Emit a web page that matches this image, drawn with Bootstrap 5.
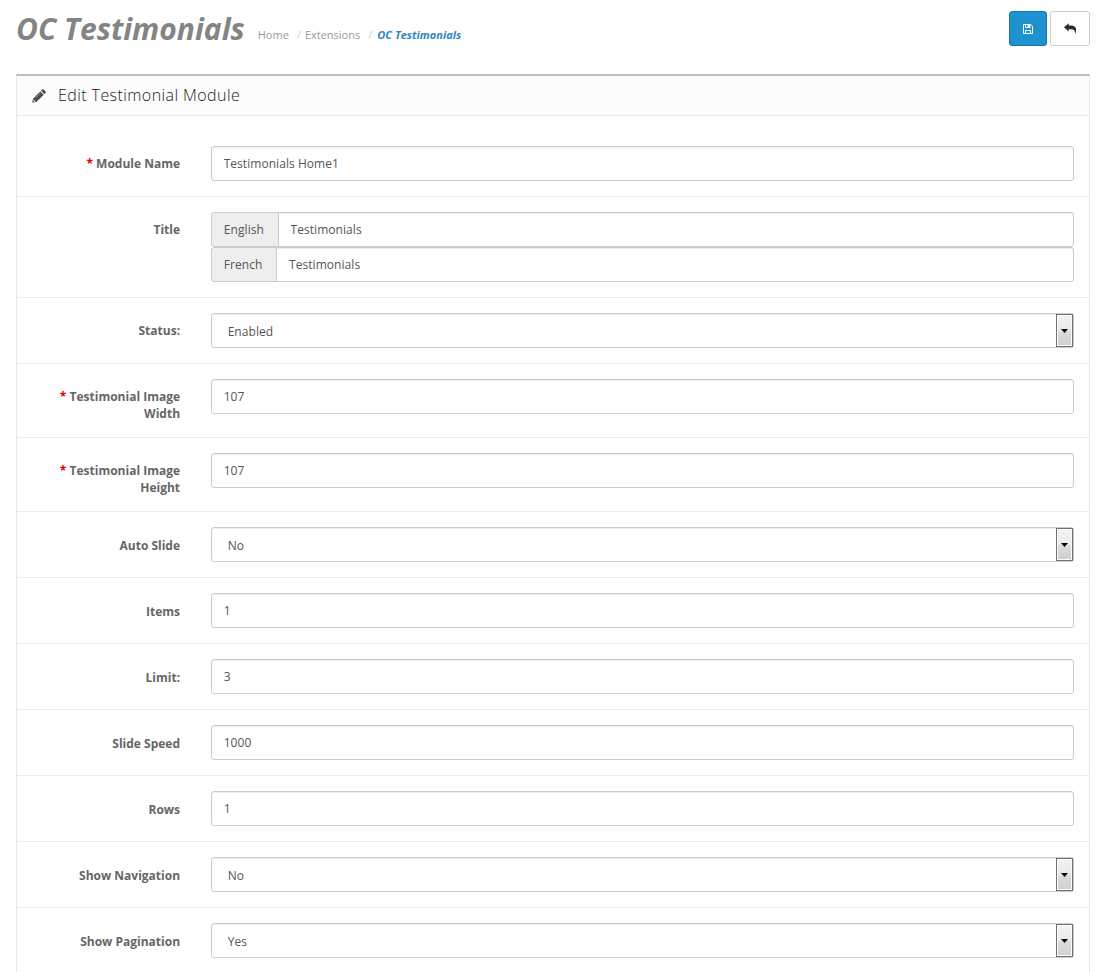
<!DOCTYPE html>
<html lang="en">
<head>
<meta charset="utf-8">
<title>OC Testimonials</title>
<link href="https://cdn.jsdelivr.net/npm/bootstrap@5.3.0/dist/css/bootstrap.min.css" rel="stylesheet">
<style>
html{overflow:hidden}
body{font-family:"Open Sans",sans-serif;font-size:12px;line-height:17px;color:#555;background:#fff}
.page-head{height:74px;padding:11px 16px 0}
.page-head h1{font-size:30px;font-weight:700;font-style:italic;line-height:33px;color:#848484;margin:0 13px 0 0;padding-top:1px;white-space:nowrap}
.crumbs{--bs-breadcrumb-padding-x:0;font-size:11px;padding-top:15px;line-height:17px}
.crumbs .breadcrumb-item{color:#999}
.crumbs .breadcrumb-item+.breadcrumb-item{padding-left:8px}
.crumbs .breadcrumb-item+.breadcrumb-item::before{padding-right:4px;color:#ccc;font-weight:400;font-style:normal}
.crumbs .breadcrumb-item.active{color:#2f86bd;font-weight:700;font-style:italic}
.crumbs .breadcrumb-item.active::before{padding-right:5px!important}
.tool{height:35px;width:40px;padding:0;border-radius:3px;display:flex;align-items:center;justify-content:center}
.tool-save{width:38px;background:#1e91cf;border-color:#1978ab}
.tool-back{background:#fff;border-color:#ccc}
.panel{margin:0 16px;border:1px solid #e8e8e8;border-top:2px solid #bfbfbf;border-bottom:0;border-radius:0}
.panel-title{height:40px;background:#fcfcfc;border-bottom:1px solid #e8e8e8;padding:0 0 0 15px;border-radius:0}
.panel-title h2{font-size:16px;font-weight:300;color:#222;letter-spacing:.42px;margin:0 0 2px 12px;line-height:18px}
.field{--bs-gutter-x:30px;margin:0 -15px;padding:15px 0}
.field+.field{border-top:1px solid #ededed}
.field label{padding-top:9px;padding-right:15.600px;font-weight:700;color:#666;text-align:right}
.field:nth-child(n+6) label{padding-top:10px}
.req::before{content:"* ";color:#e00000}
.form-control,.form-select{height:35px;padding:8px 12px;font-size:12px;line-height:17px;color:#555;border:1px solid #ccc;border-radius:3px;box-shadow:inset 0 1px 1px rgba(0,0,0,.075);letter-spacing:.05px}
.form-select{padding:9px 16px 7px;background:#fff}
.drop{position:absolute;right:1px;top:1px;width:17px;height:33px;border:1px solid #707070;box-shadow:inset 0 0 0 1px #fcfcfc;background:linear-gradient(#f2f2f2,#ebebeb 49%,#dddddd 51%,#cfcfcf);pointer-events:none}
.input-group-text{font-size:12px;line-height:17px;padding:8px 13.500px 8px 12px;background:#eee;border-color:#ccc;color:#555;border-radius:3px;letter-spacing:.1px}
</style>
</head>
<body>
<header class="page-head d-flex align-items-start">
  <h1>OC Testimonials</h1>
  <ol class="breadcrumb crumbs mb-0">
    <li class="breadcrumb-item">Home</li><li class="breadcrumb-item">Extensions</li><li class="breadcrumb-item active">OC Testimonials</li>
  </ol>
  <div class="d-flex ms-auto" style="gap:3px">
    <button class="btn btn-primary tool tool-save" aria-label="Save"><svg width="12" height="12" viewBox="0 0 12 12" fill="none" stroke="#fff"><path d="M1.500 1.500h7.200l1.800 1.800v7.200h-9zM3.500 1.500v3h4.500v-3M3.500 10.500v-3h5v3"/><path d="M5.500 2H8v2.500H5.500z" fill="#fff" stroke="none"/></svg></button>
    <button class="btn tool tool-back" aria-label="Back"><svg width="12" height="12" viewBox="0 0 12 12" fill="#2b2b2b"><path d="M0 4.300 4.700.2v2.300H7c3.800 0 5.200 2 5.100 4.700 0 1.400-.5 2.700-1.100 3.800.2-3-.5-4.700-4-4.700H4.700v2.300z"/></svg></button>
  </div>
</header>
<main class="card panel">
  <div class="card-header panel-title d-flex align-items-center">
    <svg width="14" height="14" viewBox="0 0 14 14" fill="#4a4a4a"><path d="M.3 13.500 1 9.700 8.300 2.400l3.400 3.400-7.300 7.300z"/><path d="m9 1.700 1.100-1.100q.7-.6 1.400 0l2 2q.6.700 0 1.400L12.400 5.100z"/><path d="m1.700 10.400 2 2-1.200.3-1.100-1z" fill="#fff"/><path d="m3.700 8.900 4.700-4.700" stroke="#ccc" stroke-width=".6"/></svg>
    <h2>Edit Testimonial Module</h2>
  </div>
  <form class="card-body" style="padding:15px">
    <div class="row field"><label class="col-2 req">Module Name</label><div class="col-10"><input class="form-control" value="Testimonials Home1"></div></div>
    <div class="row field"><label class="col-2">Title</label><div class="col-10">
      <div class="input-group"><span class="input-group-text">English</span><input class="form-control" value="Testimonials"></div>
      <div class="input-group"><span class="input-group-text">French</span><input class="form-control" value="Testimonials"></div></div></div>
    <div class="row field"><label class="col-2">Status:</label><div class="col-10"><div class="position-relative"><select class="form-select"><option>Enabled</option></select><span class="drop d-flex align-items-center justify-content-center"><svg width="7" height="4"><path d="M0 0h7L3.500 4z"/></svg></span></div></div></div>
    <div class="row field"><label class="col-2 req">Testimonial Image Width</label><div class="col-10"><input class="form-control" value="107"></div></div>
    <div class="row field"><label class="col-2 req">Testimonial Image Height</label><div class="col-10"><input class="form-control" value="107"></div></div>
    <div class="row field"><label class="col-2">Auto Slide</label><div class="col-10"><div class="position-relative"><select class="form-select"><option>No</option></select><span class="drop d-flex align-items-center justify-content-center"><svg width="7" height="4"><path d="M0 0h7L3.500 4z"/></svg></span></div></div></div>
    <div class="row field"><label class="col-2">Items</label><div class="col-10"><input class="form-control" value="1"></div></div>
    <div class="row field"><label class="col-2">Limit:</label><div class="col-10"><input class="form-control" value="3"></div></div>
    <div class="row field"><label class="col-2">Slide Speed</label><div class="col-10"><input class="form-control" value="1000"></div></div>
    <div class="row field"><label class="col-2">Rows</label><div class="col-10"><input class="form-control" value="1"></div></div>
    <div class="row field"><label class="col-2">Show Navigation</label><div class="col-10"><div class="position-relative"><select class="form-select"><option>No</option></select><span class="drop d-flex align-items-center justify-content-center"><svg width="7" height="4"><path d="M0 0h7L3.500 4z"/></svg></span></div></div></div>
    <div class="row field"><label class="col-2">Show Pagination</label><div class="col-10"><div class="position-relative"><select class="form-select"><option>Yes</option></select><span class="drop d-flex align-items-center justify-content-center"><svg width="7" height="4"><path d="M0 0h7L3.500 4z"/></svg></span></div></div></div>
  </form>
</main>
<script src="https://cdn.jsdelivr.net/npm/bootstrap@5.3.0/dist/js/bootstrap.bundle.min.js"></script>
</body>
</html>
